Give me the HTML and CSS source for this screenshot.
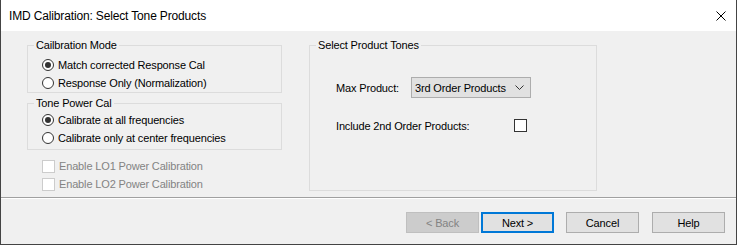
FILE: index.html
```html
<!DOCTYPE html>
<html>
<head>
<meta charset="utf-8">
<link rel="stylesheet" href="styles.css">
</head>
<body>
<div class="window">
  <div class="titlebar">
    <span class="title">IMD Calibration: Select Tone Products</span>
    <svg class="close" width="10" height="10" viewBox="0 0 10 10"><path d="M0.5 0.5 L9.5 9.5 M9.5 0.5 L0.5 9.5" stroke="#000" stroke-width="1" fill="none"/></svg>
  </div>
  <div class="main">
    <div class="left">
      <div class="group g1">
        <div class="legend">Cailbration Mode</div>
        <div class="opt"><span class="radio on"></span><span>Match corrected Response Cal</span></div>
        <div class="opt"><span class="radio"></span><span>Response Only (Normalization)</span></div>
      </div>
      <div class="group g2">
        <div class="legend">Tone Power Cal</div>
        <div class="opt"><span class="radio on"></span><span>Calibrate at all frequencies</span></div>
        <div class="opt"><span class="radio"></span><span>Calibrate only at center frequencies</span></div>
      </div>
      <div class="checks">
        <div class="opt dis"><span class="check"></span><span>Enable LO1 Power Calibration</span></div>
        <div class="opt dis"><span class="check"></span><span>Enable LO2 Power Calibration</span></div>
      </div>
    </div>
    <div class="group g3">
      <div class="legend">Select Product Tones</div>
      <div class="row r1">
        <span class="lbl l1">Max Product:</span>
        <div class="combo"><span>3rd Order Products</span><svg width="9" height="5" viewBox="0 0 9 5"><path d="M0.5 0.5 L4.5 4.5 L8.5 0.5" stroke="#333" stroke-width="1" fill="none"/></svg></div>
      </div>
      <div class="row r2">
        <span class="lbl l2">Include 2nd Order Products:</span>
        <span class="check dark"></span>
      </div>
    </div>
  </div>
  <div class="footer">
    <div class="btn disabled b-back">&lt; Back</div>
    <div class="btn default b-next">Next &gt;</div>
    <div class="btn b-cancel">Cancel</div>
    <div class="btn">Help</div>
  </div>
</div>
</body>
</html>
```
FILE: styles.css
```css
* { box-sizing: border-box; }
html, body { margin: 0; padding: 0; background: #f0f0f0; }
body { font-family: "Liberation Sans", Arial, sans-serif; font-size: 11px; color: #000; letter-spacing: -0.15px; }

.window {
  width: 737px;
  height: 245px;
  border: 1px solid #444;
  border-top: none;
  background: #f0f0f0;
  display: flex;
  flex-direction: column;
}

.titlebar {
  height: 31px;
  background: #fff;
  display: flex;
  align-items: center;
  justify-content: space-between;
  padding: 1px 10px 0 8px;
  flex: none;
}
.title { font-size: 12px; letter-spacing: -0.15px; }
.close { display: block; margin-top: -1px; }

.main {
  height: 166px;
  flex: none;
  display: flex;
  padding: 14px 0 0 26px;
}
.left { width: 255px; }

.group {
  border: 1px solid #dcdcdc;
}
.legend {
  width: fit-content;
  margin: -8px 0 0 6px;
  padding: 0 2px;
  line-height: 14px;
  background: #f0f0f0;
}
.g1 { height: 48px; }
.g2 { height: 47px; margin-top: 10px; }
.g1 .legend { margin-bottom: 4px; }
.g2 .legend { margin-bottom: 1px; }
.g1 .opt, .g2 .opt { padding-left: 14px; }

.opt {
  height: 18px;
  display: flex;
  align-items: center;
}
.radio {
  width: 12px;
  height: 12px;
  border: 1px solid #333;
  border-radius: 50%;
  background: #fff;
  margin-right: 4px;
  display: flex;
  align-items: center;
  justify-content: center;
  flex: none;
}
.radio.on::after {
  content: "";
  width: 6px;
  height: 6px;
  border-radius: 50%;
  background: #333;
}

.checks { margin-top: 7px; padding-left: 15px; }
.check {
  width: 13px;
  height: 13px;
  border: 1px solid #cccccc;
  background: #fff;
  margin-right: 4px;
  flex: none;
  display: block;
}
.dis { color: #838383; }
.check.dark { border-color: #333; margin: 0; }

.g3 {
  width: 288px;
  height: 146px;
  margin-left: 27px;
}
.row { display: flex; align-items: center; margin-left: 26px; }
.r1 { margin-top: 25px; }
.r2 { margin-top: 20px; }
.l1 { width: 75px; }
.l2 { width: 178px; padding-top: 2px; }
.combo {
  width: 120px;
  height: 21px;
  border: 1px solid #adadad;
  background: #e1e1e1;
  display: flex;
  align-items: center;
  justify-content: space-between;
  padding: 0 6px 0 3px;
}
.combo svg { display: block; }

.footer {
  flex: 1;
  border-top: 1px solid #a0a0a0;
  box-shadow: inset 0 1px 0 #fff;
  display: flex;
  justify-content: flex-end;
  align-items: flex-start;
  padding: 14px 11px 0 0;
  gap: 13px;
}
.btn {
  width: 73px;
  height: 21px;
  border: 1px solid #adadad;
  background: #e1e1e1;
  display: flex;
  align-items: center;
  justify-content: center;
}
.btn.disabled { background: #cccccc; border-color: #bfbfbf; color: #838383; }
.btn.default { border: 2px solid #0078d7; }
.b-back { margin-right: -11px; }
.b-next { margin-right: -1px; }
```
